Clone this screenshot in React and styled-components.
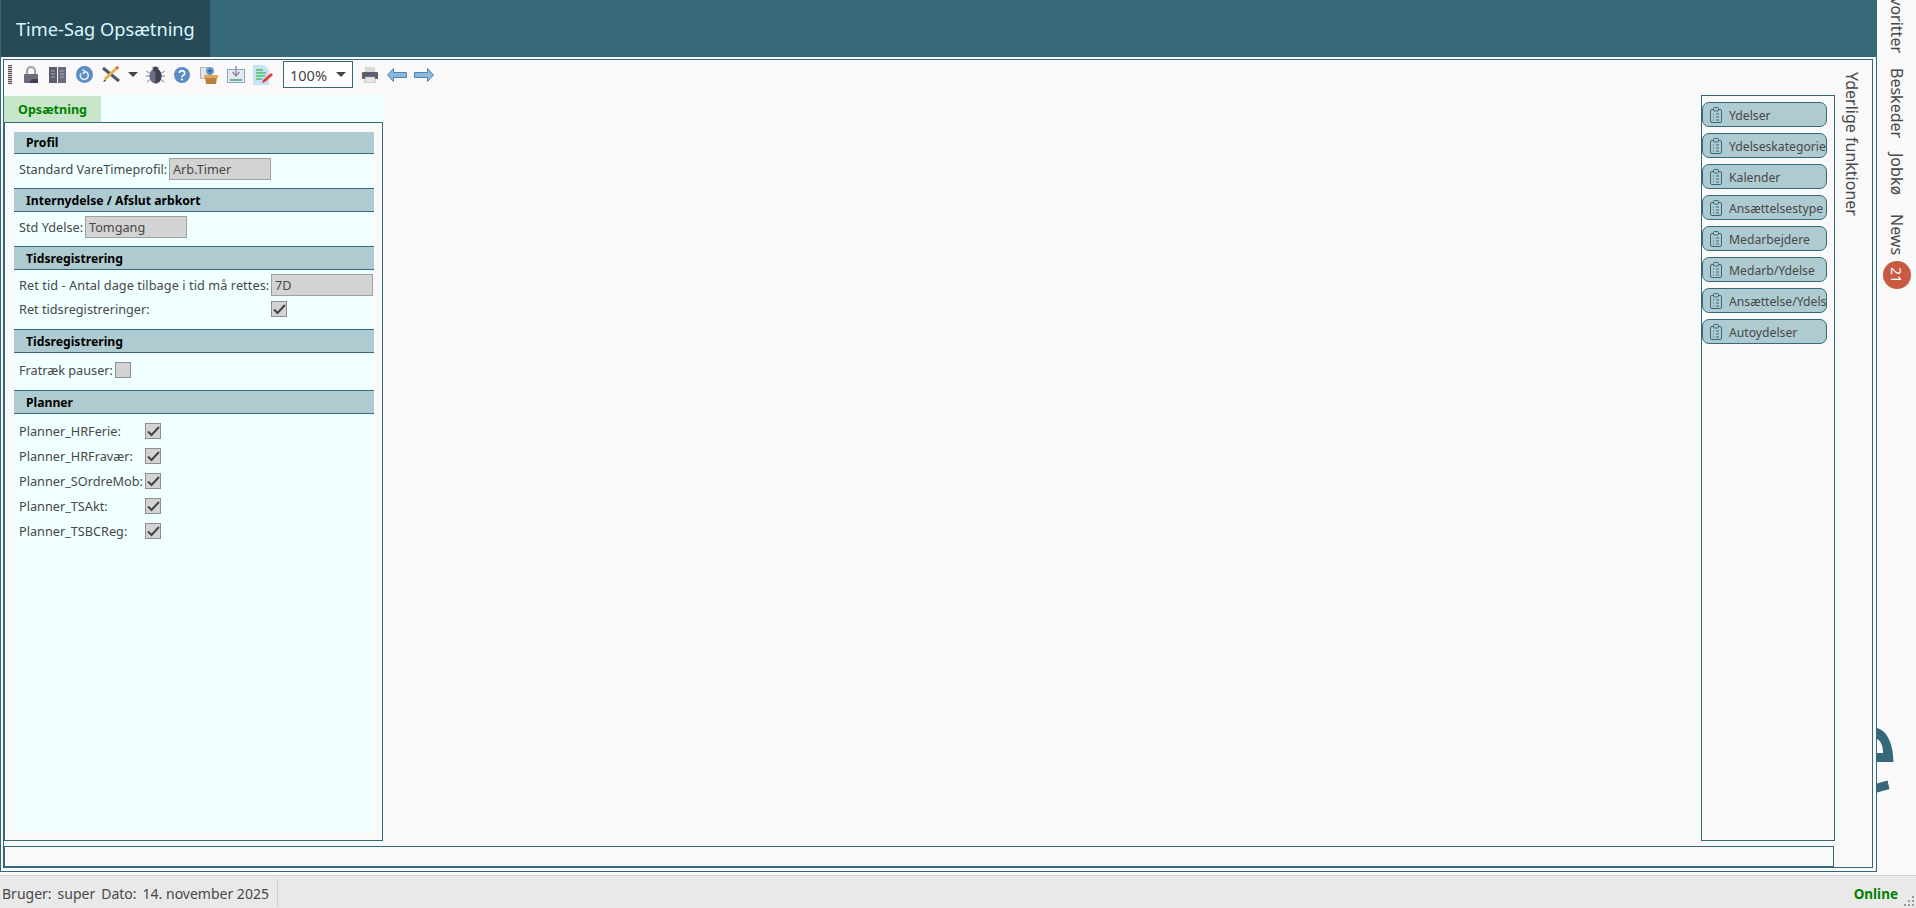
import React from 'react';
import styled, { createGlobalStyle } from 'styled-components';

const TEAL = '#35697a';
const TEXT = '#484848';

const GlobalStyle = createGlobalStyle`
	html, body, #root {
		height: 100%;
		margin: 0;
		padding: 0;
	}
	body {
		overflow: hidden;
		background-color: #f9f9f9;
		font-family: "Noto Sans", "Open Sans", sans-serif;
		color: ${TEXT};
	}
	* {
		box-sizing: border-box;
	}
`;

const Page = styled.div`
	display: flex;
	flex-direction: column;
	width: 1916px;
	height: 908px;
	overflow: hidden;
`;

const Top = styled.div`
	display: flex;
	flex: 1;
	min-height: 0;
`;

const MainColumn = styled.div`
	display: flex;
	flex-direction: column;
	width: 1877px;
`;

const Header = styled.header`
	display: flex;
	flex: 0 0 57px;
	background-color: ${TEAL};
`;

const TitleTab = styled.div`
	display: flex;
	align-items: center;
	width: 209px;
	margin-left: 1px;
	padding-left: 15px;
	background-color: #274a57;
	color: #dcf6fb;
	font-size: 18.2px;
	white-space: nowrap;
`;

const OuterFrame = styled.div`
	flex: 1;
	min-height: 0;
	margin-bottom: 3px;
	padding: 2px 3px 3px 2px;
	border: 1px solid ${TEAL};
	border-top: 0;
`;

const InnerFrame = styled.div`
	display: flex;
	flex-direction: column;
	height: 100%;
	border: 1px solid ${TEAL};
`;

const Toolbar = styled.div`
	display: flex;
	flex: 0 0 35px;
	align-items: center;
	padding: 0 0 6px 4px;
`;

const Grip = styled.div`
	width: 4px;
	height: 19px;
	margin-right: 11px;
	background: repeating-linear-gradient(to bottom, #555 0 1px, #ccc 1px 2px);
`;

const ToolIcon = styled.svg`
	display: block;
	flex: none;
	margin-right: ${p => p.$gap}px;
`;

const ZoomSelect = styled.div`
	display: flex;
	align-items: center;
	justify-content: space-between;
	width: 70px;
	height: 27px;
	margin-right: 9px;
	padding: 0 6px;
	border: 1px solid ${TEAL};
	background-color: #fff;
	color: #444;
	font-size: 14.5px;
`;

const Caret = styled.span`
	width: 0;
	height: 0;
	border-top: 5px solid #444;
	border-right: 5px solid transparent;
	border-left: 5px solid transparent;
`;

const ToolCaret = styled(Caret)`
	margin-right: 8px;
`;

const Workarea = styled.div`
	display: flex;
	flex: 1;
	min-height: 0;
`;

const LeftPanel = styled.section`
	display: flex;
	flex-direction: column;
	width: 379px;
`;

const TabStrip = styled.div`
	display: flex;
	flex: 0 0 27px;
	padding-top: 1px;
	background-color: #f0ffff;
`;

const Tab = styled.div`
	display: flex;
	align-items: center;
	justify-content: center;
	width: 97px;
	padding-top: 1px;
	background-color: #c8e6c9;
	color: #008000;
	font-size: 12.5px;
	font-weight: 700;
`;

const PanelBody = styled.div`
	flex: 1;
	min-height: 0;
	padding: 9px 8px 8px 9px;
	border: 1px solid ${TEAL};
`;

const PanelFill = styled.div`
	display: flex;
	flex-direction: column;
	height: 100%;
	background-color: #f0ffff;
`;

const SectionHead = styled.div`
	display: flex;
	align-items: center;
	height: ${p => p.$height}px;
	margin-top: ${p => p.$top}px;
	padding-left: 12px;
	border-top: ${p => (p.$plain ? 0 : `1px solid ${TEAL}`)};
	border-bottom: 1px solid ${TEAL};
	background-color: #aecbd1;
	color: #000;
	font-size: 12.2px;
	font-weight: 700;
`;

const Row = styled.div`
	display: flex;
	align-items: center;
	height: ${p => p.$height}px;
	margin-top: ${p => p.$top}px;
	padding-left: 5px;
	font-size: 12.7px;
	white-space: nowrap;
`;

const Label = styled.span`
	display: block;
	width: ${p => p.$width}px;
	margin-right: 2px;
	color: ${TEXT};
	letter-spacing: ${p => p.$spacing || 0}px;
`;

const ValueField = styled.div`
	display: flex;
	align-items: center;
	width: 102px;
	height: 22px;
	padding-left: 3px;
	border: 1px solid #a0a0a0;
	background-color: #d3d3d3;
	color: ${TEXT};
`;

const CheckBox = styled.div`
	display: flex;
	align-items: center;
	justify-content: center;
	width: 16px;
	height: 16px;
	border: 1px solid #8e8e8e;
	background-color: #d3d3d3;
`;

const Canvas = styled.div`
	flex: 1;
`;

const LinkBox = styled.aside`
	display: flex;
	flex: 0 0 134px;
	flex-direction: column;
	gap: 6px;
	width: 134px;
	min-width: 0;
	padding: 6px 7px 0 0;
	border: 1px solid ${TEAL};
`;

const LinkButton = styled.div`
	display: flex;
	flex: 0 0 25px;
	align-items: center;
	overflow: hidden;
	min-width: 0;
	padding-left: 7px;
	border: 1px solid ${TEAL};
	border-radius: 7px;
	background-color: #aecbd1;
	color: ${TEXT};
	font-size: 12.2px;
	white-space: nowrap;
`;

const LinkText = styled.span`
	flex: 1;
	min-width: 0;
	overflow: hidden;
	margin-left: 7px;
	padding-top: 1px;
`;

const SideTitleColumn = styled.div`
	display: flex;
	flex: 0 0 37px;
	justify-content: center;
	height: 200px;
	margin-top: -23px;
	padding-right: 4px;
`;

const VerticalText = styled.span`
	writing-mode: vertical-rl;
	color: ${TEXT};
	font-size: 16px;
	white-space: nowrap;
`;

const BottomBox = styled.div`
	flex: 0 0 21px;
	width: 1830px;
	margin-top: 5px;
	border: 1px solid ${TEAL};
`;

const Sidebar = styled.nav`
	position: relative;
	display: flex;
	flex: 1;
	flex-direction: column;
	align-items: center;
	gap: 15px;
	overflow: hidden;
	margin-top: -20px;
`;

const SideItem = styled(VerticalText)`
	flex: none;
	margin-top: ${p => p.$top || 0}px;
`;

const Badge = styled.span`
	display: flex;
	flex: none;
	align-items: center;
	justify-content: center;
	width: 28px;
	height: 28px;
	margin-top: -9px;
	border-radius: 50%;
	background-color: #c75b41;
	color: #fff;
	font-size: 14px;
	writing-mode: vertical-rl;
`;

const LogoPiece = styled.svg`
	position: absolute;
	top: 748px;
	left: 0;
`;

const StatusBar = styled.footer`
	position: relative;
	display: flex;
	flex: 0 0 33px;
	align-items: center;
	justify-content: space-between;
	padding-top: 2px;
	border-top: 1px solid #cfcfcf;
	background-color: #e9e9e9;
	font-size: 14px;
`;

const StatusLeft = styled.div`
	display: flex;
	align-items: center;
	gap: 6px;
	width: 278px;
	height: 28px;
	padding-left: 2px;
	border-right: 1px solid #cfcfcf;
	white-space: nowrap;
`;

const OnlineText = styled.span`
	margin: 2px 18px 0 0;
	color: #008000;
	font-size: 13.5px;
	font-weight: 700;
`;

const ResizeGrip = styled.svg`
	position: absolute;
	right: 1px;
	bottom: 1px;
`;

const icon = (w, h, gap, children) => (
	<ToolIcon width={w} height={h} viewBox={`0 0 ${w} ${h}`} $gap={gap}>{children}</ToolIcon>
);

const LockIcon = () => icon(16, 18, 10, <>
	<path d="M4 9V5a4 4 0 0 1 8 0v4" fill="none" stroke="#a3a3a3" strokeWidth="2.200" />
	<rect x="1" y="8" width="14" height="9" rx="1" fill="#6a6b7d" />
	<path d="M6 17l3-4h6v4z" fill="#3f4050" />
</>);

const BookIcon = () => icon(17, 16, 10, <>
	<rect x="0" y="0" width="8" height="16" fill="#5c5d6e" />
	<rect x="9" y="0" width="8" height="16" fill="#6b6c7d" />
	<path d="M2 4h4M2 7h4M2 10h4M11 4h4M11 7h4M11 10h4" stroke="#a9a9b5" strokeWidth="1" />
</>);

const RefreshIcon = () => icon(17, 17, 9, <>
	<circle cx="8.5" cy="8.5" r="8.5" fill="#5b8cc4" />
	<path d="M6.5 3.5l3 2.5-3 1.5M9 5.5a4 4 0 1 1-4.2 2" fill="none" stroke="#e8eef7" strokeWidth="1.600" />
</>);

const ToolsIcon = () => icon(18, 17, 8, <>
	<path d="M1 2l16 13" stroke="#55566a" strokeWidth="3" />
	<path d="M16 1L3 13" stroke="#e8b04a" strokeWidth="3" />
	<path d="M3 13l-2 3 3-1z" fill="#444" />
	<path d="M15 0l2 2-1.500 1.500-2-2z" fill="#d9634f" />
</>);

const BugIcon = () => icon(19, 18, 9, <>
	<path d="M0 5l5 3M19 5l-5 3M0 10h4M19 10h-4M1 16l4-3M18 16l-4-3M6 1l2 2M13 1l-2 2" stroke="#a5a5ad" strokeWidth="1.300" />
	<ellipse cx="9.500" cy="10" rx="6" ry="7.500" fill="#6b6c80" />
	<path d="M9.500 2.500a6 7.500 0 0 1 0 15z" fill="#3f4050" />
	<circle cx="9.500" cy="3" r="2.500" fill="#3f4050" />
</>);

const HelpIcon = () => icon(16, 16, 10, <>
	<circle cx="8" cy="8" r="8" fill="#5b8cc4" />
	<path d="M5.300 6a2.700 2.500 0 1 1 4 2.300c-1 .6-1.300 1-1.300 2" fill="none" stroke="#fff" strokeWidth="1.800" />
	<circle cx="8" cy="12.500" r="1.100" fill="#fff" />
</>);

const ImportIcon = () => icon(18, 18, 9, <>
	<rect x=".5" y="1.500" width="9" height="11" fill="#e4e4e4" stroke="#b0b0b0" />
	<path d="M5 11h12l-1 7H6z" fill="#b97f38" />
	<rect x="4" y="9" width="14" height="3" fill="#e0a95a" />
	<circle cx="10" cy="5" r="4" fill="#6d9ccc" />
	<path d="M8 5h4M10 3v5" stroke="#2f5f90" strokeWidth="1.200" />
</>);

const DownloadIcon = () => icon(18, 18, 8, <>
	<rect x=".5" y="3.500" width="17" height="13" fill="#dfeaf5" stroke="#8fa4ba" />
	<rect x="3" y="13" width="12" height="2" fill="#72b08a" />
	<path d="M9 0v9M5.500 6L9 10l3.500-4" fill="none" stroke="#9a7fa3" strokeWidth="1.300" />
</>);

const NotesIcon = () => icon(20, 20, 10, <>
	<path d="M0 0h11l5 5v15H0z" fill="#c6e3f6" />
	<path d="M3 5h7M3 8h10M3 11h9M3 14h6" stroke="#4fbf6a" strokeWidth="1.500" />
	<path d="M9 18l1-3 8-7 2 2-8 7z" fill="#e23c3c" />
</>);

const PrinterIcon = () => icon(16, 16, 9, <>
	<rect x="3" y="0" width="10" height="6" fill="#d8d8d8" />
	<rect x="0" y="5" width="16" height="7" rx="1" fill="#5c5d6e" />
	<rect x="3" y="10" width="10" height="6" fill="#e8e8e8" stroke="#999" strokeWidth=".6" />
</>);

const ArrowIcon = ({ flip }) => (
	<ToolIcon width={20} height={14} viewBox="0 0 20 14" $gap={7}>
		<path
			d={flip ? 'M19.500 7l-6-6.500v4H.5v5h13v4z' : 'M.5 7l6-6.500v4h13v5h-13v4z'}
			fill="#8ab8dc"
			stroke="#4d86b5"
			strokeWidth="1"
		/>
	</ToolIcon>
);

const CheckMark = () => (
	<svg width="13" height="11" viewBox="0 0 13 11">
		<path d="M1 5.500l3.500 3.500L12 1" fill="none" stroke="#444" strokeWidth="2" />
	</svg>
);

const ClipIcon = styled.svg`
	flex: none;
`;

const ClipboardIcon = () => (
	<ClipIcon width="12" height="16" viewBox="0 0 12 16">
		<rect x=".5" y="2.500" width="11" height="13" rx="1.500" fill="none" stroke={TEAL} />
		<rect x="3.500" y=".5" width="5" height="3.500" rx="1" fill="#aecbd1" stroke={TEAL} />
		<path d="M3 7h1M3 10h1M3 13h1M6 7h3M6 10h3M6 13h3" stroke={TEAL} />
	</ClipIcon>
);

const links = ['Ydelser', 'Ydelseskategorier', 'Kalender', 'Ansættelsestype', 'Medarbejdere', 'Medarb/Ydelse', 'Ansættelse/Ydelse', 'Autoydelser'];
const planners = ['Planner_HRFerie:', 'Planner_HRFravær:', 'Planner_SOrdreMob:', 'Planner_TSAkt:', 'Planner_TSBCReg:'];

const Checked = () => <CheckBox><CheckMark /></CheckBox>;

export default function App() {
	return (
		<Page>
			<GlobalStyle />
			<Top>
				<MainColumn>
					<Header>
						<TitleTab>Time-Sag Opsætning</TitleTab>
					</Header>
					<OuterFrame>
						<InnerFrame>
							<Toolbar>
								<Grip />
								<LockIcon />
								<BookIcon />
								<RefreshIcon />
								<ToolsIcon />
								<ToolCaret />
								<BugIcon />
								<HelpIcon />
								<ImportIcon />
								<DownloadIcon />
								<NotesIcon />
								<ZoomSelect>100%<Caret /></ZoomSelect>
								<PrinterIcon />
								<ArrowIcon />
								<ArrowIcon flip />
							</Toolbar>
							<Workarea>
								<LeftPanel>
									<TabStrip><Tab>Opsætning</Tab></TabStrip>
									<PanelBody>
										<PanelFill>
											<SectionHead $plain $height={22} $top={0}>Profil</SectionHead>
											<Row $height={22} $top={4}>
												<Label $width={148}>Standard VareTimeprofil:</Label>
												<ValueField>Arb.Timer</ValueField>
											</Row>
											<SectionHead $height={24} $top={8}>Internydelse / Afslut arbkort</SectionHead>
											<Row $height={22} $top={4}>
												<Label $width={64}>Std Ydelse:</Label>
												<ValueField>Tomgang</ValueField>
											</Row>
											<SectionHead $height={24} $top={8}>Tidsregistrering</SectionHead>
											<Row $height={22} $top={4}>
												<Label $width={250} $spacing={0.08}>Ret tid - Antal dage tilbage i tid må rettes:</Label>
												<ValueField>7D</ValueField>
											</Row>
											<Row $height={16} $top={5}>
												<Label $width={250}>Ret tidsregistreringer:</Label>
												<Checked />
											</Row>
											<SectionHead $height={24} $top={12}>Tidsregistrering</SectionHead>
											<Row $height={16} $top={9}>
												<Label $width={94}>Fratræk pauser:</Label>
												<CheckBox />
											</Row>
											<SectionHead $height={24} $top={12}>Planner</SectionHead>
											{planners.map(name => (
												<Row key={name} $height={16} $top={9}>
													<Label $width={124}>{name}</Label>
													<Checked />
												</Row>
											))}
										</PanelFill>
									</PanelBody>
								</LeftPanel>
								<Canvas />
								<LinkBox>
									{links.map(name => (
										<LinkButton key={name}>
											<ClipboardIcon />
											<LinkText>{name}</LinkText>
										</LinkButton>
									))}
								</LinkBox>
								<SideTitleColumn>
									<VerticalText>Yderlige funktioner</VerticalText>
								</SideTitleColumn>
							</Workarea>
							<BottomBox />
						</InnerFrame>
					</OuterFrame>
				</MainColumn>
				<Sidebar>
					<SideItem>Favoritter</SideItem>
					<SideItem>Beskeder</SideItem>
					<SideItem>Jobkø</SideItem>
					<SideItem $top={4}>News</SideItem>
					<Badge>21</Badge>
					<LogoPiece width="20" height="66" viewBox="0 0 20 66">
						<path d="M0 0C8 2 16 12 16.500 34L0 34 0 25 6 25C6 18 4 13 0 11Z" fill={TEAL} />
						<path d="M0 55.500 10.500 52.500 12.500 61 0 64.500Z" fill={TEAL} />
					</LogoPiece>
				</Sidebar>
			</Top>
			<StatusBar>
				<StatusLeft>
					<span>Bruger:</span>
					<span>super</span>
					<span>Dato:</span>
					<span>14. november 2025</span>
				</StatusLeft>
				<OnlineText>Online</OnlineText>
				<ResizeGrip width="12" height="12" viewBox="0 0 12 12">
					<path d="M9 1h2v2H9zM5 5h2v2H5zM9 5h2v2H9zM1 9h2v2H1zM5 9h2v2H5zM9 9h2v2H9z" fill="#9a9a9a" />
				</ResizeGrip>
			</StatusBar>
		</Page>
	);
}
